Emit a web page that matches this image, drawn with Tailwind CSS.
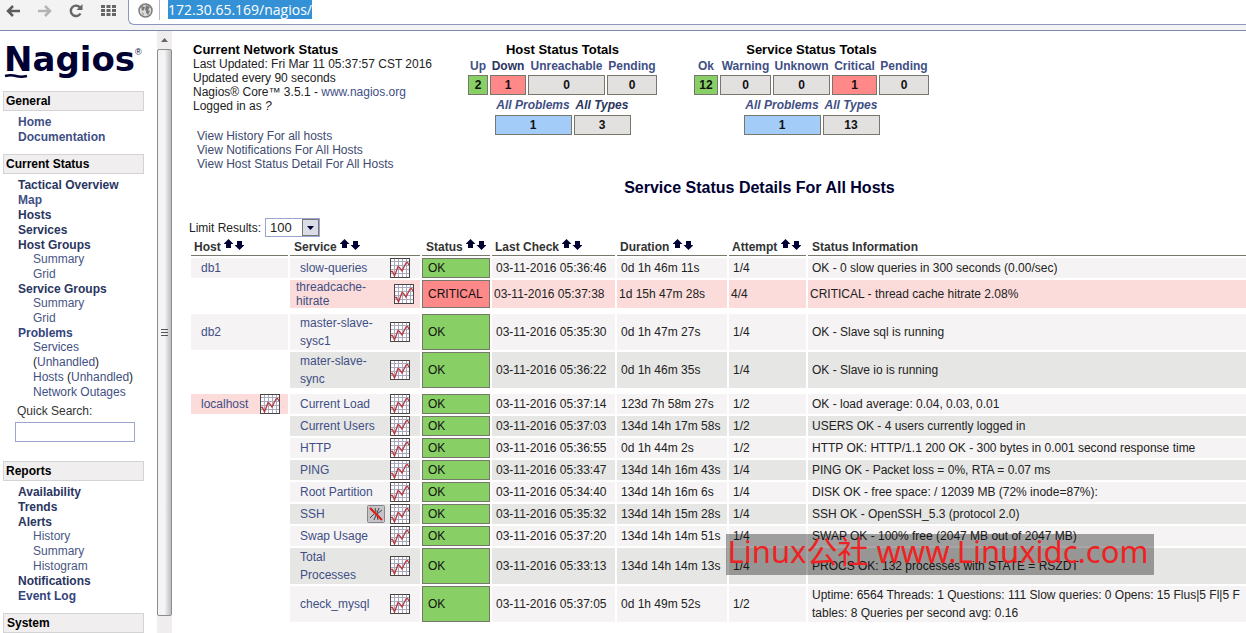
<!DOCTYPE html>
<html lang="en">
<head>
    <meta charset="UTF-8">
    <meta name="viewport" content="width=device-width, initial-scale=1.0">
    <title>Nagios Core</title>
    <script src="https://cdn.jsdelivr.net/npm/@tailwindcss/browser@4"></script>
</head>
<body class="relative flex h-screen flex-col overflow-hidden bg-white font-['Liberation_Sans',Arial,sans-serif] text-xs text-[#222]">

    <!-- Icons -->
    <svg class="hidden">
        <symbol id="graph" viewBox="0 0 20 20">
            <rect width="20" height="20" fill="#fdfdfd"/>
            <path d="M4.500 1v18M8.500 1v18M12.500 1v18M16.500 1v18M1 3.500h18M1 7.500h18M1 11.500h18M1 15.500h18" stroke="#a9a9bd" fill="none"/>
            <path d="M1 13.500h1.500L4.500 18 8 8.500l1.500 1L12 13l4-8 1.500-.5L19 7" stroke="#b8373f" stroke-width="1.300" fill="none"/>
            <rect x=".5" y=".5" width="19" height="19" fill="none" stroke="#4a4446"/>
        </symbol>
        <symbol id="nochecks" viewBox="0 0 18 18">
            <rect x=".5" y=".5" width="17" height="17" rx="1" fill="#c4c4c8" stroke="#85858f"/>
            <path d="M4 5l3 2M3 13l4-4M8 3l1 4M12 3l-2 5M15 5l-5 4M7 15l2-5M11 15l-1-5" stroke="#444" fill="none"/>
            <path d="M3 3l12 12" stroke="#d81e1e" stroke-width="2.200"/>
        </symbol>
        <symbol id="sort" viewBox="0 0 20 11">
            <path d="M4.500 0L9.500 5H7v4H2V5H-.5z" fill="#000033"/>
            <path d="M15.500 11L20.500 6H18V2h-5v4h-2.500z" fill="#000033"/>
        </symbol>
    </svg>

    <!-- Browser toolbar -->
    <header class="flex h-[31px] shrink-0 items-start border-b border-[#8087ad] bg-[#f4f3f4]">
        <nav class="flex h-[21px] w-32 shrink-0 items-center justify-between pr-3 pl-[6px]">
            <button aria-label="Back"><svg class="h-[12px] w-[14px]" viewBox="0 0 14 12"><path d="M7 1L2 6l5 5M2 6h12" stroke="#5c5c5c" stroke-width="2.500" fill="none"/></svg></button>
            <button aria-label="Forward"><svg class="h-[12px] w-[14px]" viewBox="0 0 14 12"><path d="M7 1l5 5-5 5M12 6H0" stroke="#b4b4b4" stroke-width="2.500" fill="none"/></svg></button>
            <button aria-label="Reload"><svg class="size-[14px]" viewBox="0 0 14 14"><path d="M11.500 9.500A5.200 5.200 0 1 1 11 3.500" stroke="#666" stroke-width="2.400" fill="none"/><path d="M13.500 0v6H7.500z" fill="#666"/></svg></button>
            <button aria-label="Speed dial"><svg class="h-[12px] w-[15px]" viewBox="0 0 15 12"><path d="M0 1.500h15M0 5.500h15M0 9.500h15" stroke="#666" stroke-width="3" stroke-dasharray="4 1.500"/></svg></button>
        </nav>
        <div class="flex h-[25px] grow items-start rounded-bl-md border-b border-l border-[#8d96c0] bg-white">
            <span class="flex h-5 w-[31px] shrink-0 items-center justify-center border-r border-[#b5b9cc] pl-[2px]">
                <svg class="size-[15px]" viewBox="0 0 15 15"><circle cx="7.500" cy="7.500" r="6.500" fill="#dcdcdc" stroke="#7c7c7c" stroke-width="1.500"/><path d="M3 3l4 1-1 3-2 1zM8 2l4 2-2 3 2 1-2 4-2-2V8L7 7zM4 9l2 2-1 1z" fill="#7c7c7c"/></svg>
            </span>
            <input type="text" aria-label="Address" value="172.30.65.169/nagios/" class="ml-2 h-[19px] w-[144px] bg-[#3491d6] font-['Open_Sans',sans-serif] text-sm text-white outline-none">
        </div>
    </header>

    <div class="flex min-h-0 grow">
        <!-- Side menu -->
        <aside class="w-[157px] shrink-0 overflow-hidden pt-[10px] pl-[3px] leading-[15px] text-[#3f4f85]">
            <div class="flex h-[50px] items-start text-[#000033]">
                <div class="pl-px">
                    <div class="font-['DejaVu_Sans',sans-serif] text-[34px] leading-[36px] font-bold">Nagios</div>
                    <svg class="-mt-[3px] h-[4px] w-6" viewBox="0 0 24 4"><path d="M1 2q6-1.500 11 0t11 0" stroke="#000033" stroke-width="2.500" fill="none"/></svg>
                </div>
                <span class="pt-[5px] text-[9px] leading-3">®</span>
            </div>

            <h2 class="mr-[13px] h-5 border border-[#d3d3d3] bg-[#f0eeee] pl-[2px] leading-[18px] font-bold text-black">General</h2>
            <ul class="pt-1 pb-[9px] pl-[15px] font-bold">
                <li><a href="#">Home</a></li>
                <li><a href="#">Documentation</a></li>
            </ul>

            <h2 class="mr-[13px] h-5 border border-[#d3d3d3] bg-[#f0eeee] pl-[2px] leading-[18px] font-bold text-black">Current Status</h2>
            <ul class="pt-1 pl-[15px] font-bold text-[#2a3560]">
                <li><a href="#">Tactical Overview</a></li>
                <li><a href="#" class="text-[#3f4f85]">Map</a></li>
                <li><a href="#">Hosts</a></li>
                <li><a href="#">Services</a></li>
                <li class="leading-[14px]"><a href="#">Host Groups</a></li>
                <li>
                    <ul class="pl-[15px] font-normal text-[#4a5785]">
                        <li><a href="#">Summary</a></li>
                        <li><a href="#">Grid</a></li>
                    </ul>
                </li>
                <li class="leading-[14px]"><a href="#">Service Groups</a></li>
                <li>
                    <ul class="pl-[15px] font-normal text-[#4a5785]">
                        <li><a href="#">Summary</a></li>
                        <li><a href="#">Grid</a></li>
                    </ul>
                </li>
                <li class="leading-[14px]"><a href="#" class="text-[#34447c]">Problems</a></li>
                <li>
                    <ul class="pl-[15px] font-normal text-[#3f4f85]">
                        <li><a href="#">Services</a></li>
                        <li><span class="text-[#222]">(</span><a href="#">Unhandled</a><span class="text-[#222]">)</span></li>
                        <li><a href="#">Hosts</a> <span class="text-[#222]">(</span><a href="#">Unhandled</a><span class="text-[#222]">)</span></li>
                        <li><a href="#">Network Outages</a></li>
                    </ul>
                </li>
            </ul>
            <form class="pt-1 pb-[19px] pl-[12px]">
                <label for="search" class="block pl-[2px] text-[#333]">Quick Search:</label>
                <input id="search" type="text" class="mt-[3px] block h-5 w-[120px] border border-[#9aa6cf] bg-white px-1 outline-none">
            </form>

            <h2 class="mr-[13px] h-5 border border-[#d3d3d3] bg-[#f0eeee] pl-[2px] leading-[18px] font-bold text-black">Reports</h2>
            <ul class="pt-1 pb-[9px] pl-[15px] font-bold text-[#2a3560]">
                <li><a href="#">Availability</a></li>
                <li><a href="#">Trends</a></li>
                <li class="leading-[14px]"><a href="#">Alerts</a></li>
                <li>
                    <ul class="pl-[15px] font-normal text-[#4a5785]">
                        <li><a href="#">History</a></li>
                        <li><a href="#">Summary</a></li>
                        <li><a href="#">Histogram</a></li>
                    </ul>
                </li>
                <li><a href="#">Notifications</a></li>
                <li><a href="#" class="text-[#34447c]">Event Log</a></li>
            </ul>

            <h2 class="mr-[13px] h-5 border border-[#d3d3d3] bg-[#f0eeee] pl-[3px] leading-[18px] font-bold text-black">System</h2>
        </aside>

        <!-- Frame scrollbar -->
        <div class="flex w-[15px] shrink-0 flex-col bg-[#efedee]">
            <div class="flex h-[18px] items-center justify-center"><svg class="h-[4px] w-[7px]" viewBox="0 0 7 4"><path d="M3.500 0L7 4H0z" fill="#666"/></svg></div>
            <div class="mb-[17px] flex grow items-center justify-center rounded-xs border border-[#8c8c8c] bg-linear-to-r from-[#f4f4f4] from-50% to-[#bdbdc4]">
                <svg class="h-[8px] w-[7px]" viewBox="0 0 7 8"><path d="M0 .5h7M0 3.500h7M0 6.500h7" stroke="#555"/></svg>
            </div>
        </div>

        <main class="min-w-0 grow overflow-hidden pt-[11px] pl-[17px]">
            <div class="flex h-[132px] items-start">
                <div class="w-[277px] shrink-0 pt-px pl-1 leading-[14px]">
                    <h1 class="text-[13px] leading-[14px] font-bold text-black">Current Network Status</h1>
                    <p>Last Updated: Fri Mar 11 05:37:57 CST 2016</p>
                    <p>Updated every 90 seconds</p>
                    <p>Nagios® Core™ 3.5.1 - <a href="#" class="text-[#3f4f85]">www.nagios.org</a></p>
                    <p>Logged in as <i>?</i></p>
                    <ul class="pt-4 pl-1 text-[#3d4a70]">
                        <li><a href="#">View History For all hosts</a></li>
                        <li><a href="#">View Notifications For All Hosts</a></li>
                        <li><a href="#">View Host Status Detail For All Hosts</a></li>
                    </ul>
                </div>

                <section class="flex flex-col items-center">
                    <h2 class="pt-px text-[13px] leading-[14px] font-bold text-black">Host Status Totals</h2>
                    <table class="border-separate border-spacing-x-[2px] text-center font-bold">
                        <thead>
                            <tr class="h-[18px] text-[#3f4f85]">
                                <th class="w-5"><a href="#">Up</a></th>
                                <th class="w-9 text-[#2a3560]"><a href="#">Down</a></th>
                                <th class="w-[77px]"><a href="#">Unreachable</a></th>
                                <th class="w-[50px]"><a href="#">Pending</a></th>
                            </tr>
                        </thead>
                        <tbody>
                            <tr class="h-5 text-[#111]">
                                <td class="border border-[#77776b] bg-[#88d066]">2</td>
                                <td class="border border-[#77776b] bg-[#ff8888]">1</td>
                                <td class="border border-[#77776b] bg-[#e2e1e0]">0</td>
                                <td class="border border-[#77776b] bg-[#e2e1e0]">0</td>
                            </tr>
                        </tbody>
                    </table>
                    <table class="border-separate border-spacing-x-[2px] text-center font-bold">
                        <thead>
                            <tr class="h-5 text-[#3f4f85] italic">
                                <th class="w-[77px]"><a href="#">All Problems</a></th>
                                <th class="w-[57px] text-[#2a3560]"><a href="#">All Types</a></th>
                            </tr>
                        </thead>
                        <tbody>
                            <tr class="h-5 text-[#111]">
                                <td class="border border-[#77776b] bg-[#a3ccf8]">1</td>
                                <td class="border border-[#77776b] bg-[#e2e1e0]">3</td>
                            </tr>
                        </tbody>
                    </table>
                </section>

                <section class="ml-[33px] flex flex-col items-center">
                    <h2 class="pt-px text-[13px] leading-[14px] font-bold text-black">Service Status Totals</h2>
                    <table class="border-separate border-spacing-x-[2px] text-center font-bold">
                        <thead>
                            <tr class="h-[18px] text-[#3f4f85]">
                                <th class="w-6"><a href="#">Ok</a></th>
                                <th class="w-[51px]"><a href="#">Warning</a></th>
                                <th class="w-[57px]"><a href="#">Unknown</a></th>
                                <th class="w-[45px]"><a href="#">Critical</a></th>
                                <th class="w-[50px]"><a href="#">Pending</a></th>
                            </tr>
                        </thead>
                        <tbody>
                            <tr class="h-5 text-[#111]">
                                <td class="border border-[#77776b] bg-[#88d066]">12</td>
                                <td class="border border-[#77776b] bg-[#e2e1e0]">0</td>
                                <td class="border border-[#77776b] bg-[#e2e1e0]">0</td>
                                <td class="border border-[#77776b] bg-[#ff8888]">1</td>
                                <td class="border border-[#77776b] bg-[#e2e1e0]">0</td>
                            </tr>
                        </tbody>
                    </table>
                    <table class="border-separate border-spacing-x-[2px] text-center font-bold">
                        <thead>
                            <tr class="h-5 text-[#3f4f85] italic">
                                <th class="w-[77px]"><a href="#">All Problems</a></th>
                                <th class="w-[57px]"><a href="#">All Types</a></th>
                            </tr>
                        </thead>
                        <tbody>
                            <tr class="h-5 text-[#111]">
                                <td class="border border-[#77776b] bg-[#a3ccf8]">1</td>
                                <td class="border border-[#77776b] bg-[#e2e1e0]">13</td>
                            </tr>
                        </tbody>
                    </table>
                </section>
            </div>

            <!-- The details run on past the right edge of the frame -->
            <div class="-mr-[84px]">
                <h2 class="pt-1 text-center text-base leading-[20px] font-bold text-[#000033]">Service Status Details For All Hosts</h2>

                <form class="mt-5 flex h-[19px] items-center">
                    <label for="limit" class="w-[76px]">Limit Results:</label>
                    <div class="relative">
                        <select id="limit" class="block h-[19px] w-[55px] appearance-none border border-[#9aa6cf] bg-white pl-1 text-[13px] leading-[17px] outline-none">
                            <option>100</option>
                        </select>
                        <span class="pointer-events-none absolute top-px right-px flex h-[17px] w-[17px] items-center justify-center border border-[#777] bg-[#dcdce6]">
                            <svg class="h-[4px] w-[7px]" viewBox="0 0 7 4"><path d="M0 0h7L3.500 4z" fill="#000033"/></svg>
                        </span>
                    </div>
                </form>

                <table class="w-full table-fixed border-separate border-spacing-[2px]">
                    <thead>
                        <tr class="h-[17px] text-left align-top leading-4 whitespace-nowrap text-[#333]">
                            <th class="w-[97px] border-b border-[#77776b] pl-[3px]">Host <svg class="inline h-[11px] w-5 align-[1px]"><use href="#sort"/></svg></th>
                            <th class="w-[130px] border-b border-[#77776b] pl-1">Service <svg class="inline h-[11px] w-5 align-[1px]"><use href="#sort"/></svg></th>
                            <th class="w-[68px] border-b border-[#77776b] pl-1">Status <svg class="inline h-[11px] w-5 align-[1px]"><use href="#sort"/></svg></th>
                            <th class="w-[123px] border-b border-[#77776b] pl-[3px]">Last Check <svg class="inline h-[11px] w-5 align-[1px]"><use href="#sort"/></svg></th>
                            <th class="w-[110px] border-b border-[#77776b] pl-[3px]">Duration <svg class="inline h-[11px] w-5 align-[1px]"><use href="#sort"/></svg></th>
                            <th class="w-[77px] border-b border-[#77776b] pl-[3px]">Attempt <svg class="inline h-[11px] w-5 align-[1px]"><use href="#sort"/></svg></th>
                            <th class="border-b border-[#77776b] pl-1">Status Information</th>
                        </tr>
                    </thead>
                    <tbody id="services"></tbody>
                </table>
            </div>
        </main>
    </div>

    <div class="absolute top-[534px] left-[726px] flex h-[41px] w-[428px] items-center justify-center bg-black/35 pr-1 pb-[6px] font-['Noto_Sans','Noto_Sans_CJK_SC',sans-serif] text-[31px] leading-none whitespace-nowrap text-[#ee2222]">Linux公社 www.Linuxidc.com</div>

    <script>
        // A null entry is the thin spacer between two hosts
        const services = [
            { host: 'db1', name: 'slow-queries', check: '03-11-2016 05:36:46', duration: '0d 1h 46m 11s', attempt: '1/4', info: 'OK - 0 slow queries in 300 seconds (0.00/sec)' },
            { name: 'threadcache-<br>hitrate', critical: true, check: '03-11-2016 05:37:38', duration: '1d 15h 47m 28s', attempt: '4/4', info: 'CRITICAL - thread cache hitrate 2.08%' },
            null,
            { host: 'db2', name: 'master-slave-<br>sysc1', check: '03-11-2016 05:35:30', duration: '0d 1h 47m 27s', attempt: '1/4', info: 'OK - Slave sql is running' },
            { name: 'mater-slave-<br>sync', odd: true, check: '03-11-2016 05:36:22', duration: '0d 1h 46m 35s', attempt: '1/4', info: 'OK - Slave io is running' },
            null,
            { host: 'localhost', hostGraph: true, name: 'Current Load', check: '03-11-2016 05:37:14', duration: '123d 7h 58m 27s', attempt: '1/2', info: 'OK - load average: 0.04, 0.03, 0.01' },
            { name: 'Current Users', odd: true, check: '03-11-2016 05:37:03', duration: '134d 14h 17m 58s', attempt: '1/2', info: 'USERS OK - 4 users currently logged in' },
            { name: 'HTTP', check: '03-11-2016 05:36:55', duration: '0d 1h 44m 2s', attempt: '1/2', info: 'HTTP OK: HTTP/1.1 200 OK - 300 bytes in 0.001 second response time' },
            { name: 'PING', odd: true, check: '03-11-2016 05:33:47', duration: '134d 14h 16m 43s', attempt: '1/4', info: 'PING OK - Packet loss = 0%, RTA = 0.07 ms' },
            { name: 'Root Partition', check: '03-11-2016 05:34:40', duration: '134d 14h 16m 6s', attempt: '1/4', info: 'DISK OK - free space: / 12039 MB (72% inode=87%):' },
            { name: 'SSH', odd: true, muted: true, check: '03-11-2016 05:35:32', duration: '134d 14h 15m 28s', attempt: '1/4', info: 'SSH OK - OpenSSH_5.3 (protocol 2.0)' },
            { name: 'Swap Usage', check: '03-11-2016 05:37:20', duration: '134d 14h 14m 51s', attempt: '1/4', info: 'SWAP OK - 100% free (2047 MB out of 2047 MB)' },
            { name: 'Total<br>Processes', odd: true, check: '03-11-2016 05:33:13', duration: '134d 14h 14m 13s', attempt: '1/4', info: 'PROCS OK: 132 processes with STATE = RSZDT' },
            { name: 'check_mysql', check: '03-11-2016 05:37:05', duration: '0d 1h 49m 52s', attempt: '1/2', info: 'Uptime: 6564 Threads: 1 Questions: 111 Slow queries: 0 Opens: 15 Flus|5 Fl|5 F<br>tables: 8 Queries per second avg: 0.16' }
        ];

        const graph = '<svg class="size-5 shrink-0"><use href="#graph"/></svg>';
        const muted = '<svg class="mr-[5px] ml-auto size-[18px] shrink-0"><use href="#nochecks"/></svg>';

        document.getElementById('services').innerHTML = services.map(s => {
            if (!s) {
                return '<tr class="h-[2px]"><td colspan="7"></td></tr>';
            }
            const bg = s.critical ? 'bg-[#fbdcda]' : s.odd ? 'bg-[#e6e6e4]' : 'bg-[#f5f3f3]';
            const hostBg = s.hostGraph ? 'bg-[#fbdcda]' : 'bg-[#f5f3f3]';
            const pad = s.critical ? 'pl-[2px]' : 'pl-1';
            const host = s.host
                ? `<td class="${hostBg}"><div class="flex items-center justify-between pr-2 pl-[10px] text-[#3f4f85]"><a href="#">${s.host}</a>${s.hostGraph ? graph : ''}</div></td>`
                : '<td></td>';
            return `
                <tr class="whitespace-nowrap ${s.critical ? 'leading-[14px]' : 'leading-[18px]'}">
                    ${host}
                    <td class="${bg}">
                        <div class="flex items-center justify-between text-[#3f4f85] ${s.critical ? 'px-[6px]' : 'px-[10px]'}">
                            <a href="#">${s.name}</a>${s.muted ? muted : ''}${graph}
                        </div>
                    </td>
                    <td class="border border-[#77776b] pl-[5px] text-[#111] ${s.critical ? 'bg-[#ff8888]' : 'bg-[#88d066]'}">${s.critical ? 'CRITICAL' : 'OK'}</td>
                    <td class="${bg} ${pad}">${s.check}</td>
                    <td class="${bg} ${pad}">${s.duration}</td>
                    <td class="${bg} ${pad}">${s.attempt}</td>
                    <td class="${bg} ${pad}">${s.info}</td>
                </tr>`;
        }).join('');
    </script>
</body>
</html>
